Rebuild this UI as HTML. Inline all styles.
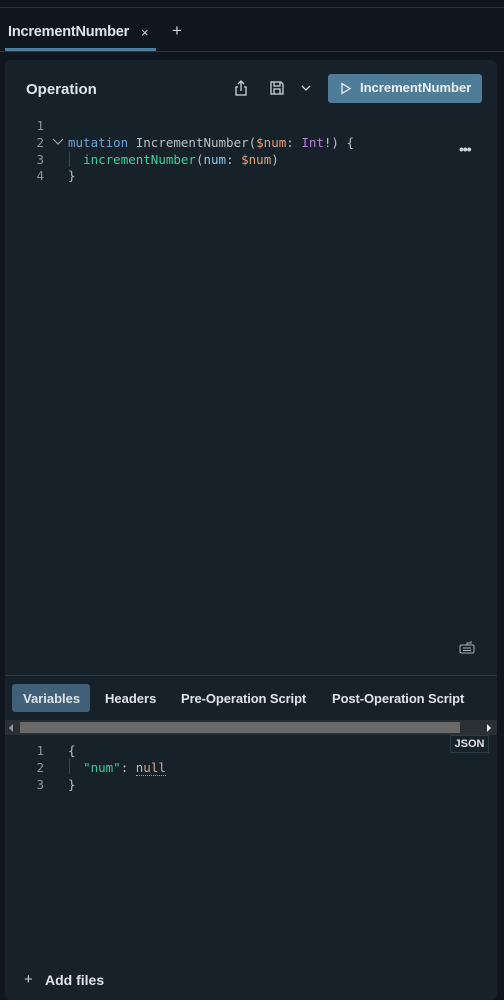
<!DOCTYPE html>
<html><head><meta charset="utf-8"><style>
*{margin:0;padding:0;box-sizing:border-box}
body{width:504px;height:998px;background:#0f161d;font-family:"Liberation Sans",sans-serif;color:#dfe4e8;position:relative;overflow:hidden}
.abs{position:absolute}
.mono{font-family:"DejaVu Sans Mono",monospace;font-size:12.5px;white-space:pre}
.ln{color:#8a949c;width:20px;text-align:right}
</style></head><body>
<div class="abs" style="left:0;top:7px;width:504px;height:1px;background:#26313b"></div>
<div class="abs" style="left:8px;top:24px;font-size:14.5px;font-weight:bold;color:#dfe4e8;letter-spacing:-0.2px">IncrementNumber</div>
<div class="abs" style="left:141px;top:25px;font-size:13px;color:#cdd3d8">×</div>
<div class="abs" style="left:172px;top:21px;font-size:17px;color:#cdd3d8">+</div>
<div class="abs" style="left:5px;top:48px;width:151px;height:3px;background:#4f7d9c"></div>
<div class="abs" style="left:0;top:51px;width:504px;height:1px;background:#2c3943"></div>
<div class="abs" style="left:5px;top:60px;width:492px;height:940px;background:#17212a;border-radius:6px"></div>
<div class="abs" style="left:26px;top:81px;font-size:15px;font-weight:bold;color:#dfe4e8">Operation</div>
<svg class="abs" style="left:233px;top:79px" width="16" height="18" viewBox="0 0 16 18" fill="none" stroke="#cfd5da" stroke-width="1.3"><path d="M8 12V2M5 5l3-3 3 3M5 8H3v8h10V8h-2"/></svg>
<svg class="abs" style="left:269px;top:80px" width="16" height="16" viewBox="0 0 16 16" fill="none" stroke="#cfd5da" stroke-width="1.3"><path d="M2 2h10l2 2v10H2z M5 2v4h6V2 M5 14v-5h6v5"/></svg>
<svg class="abs" style="left:301px;top:84px" width="10" height="8" viewBox="0 0 10 8" fill="none" stroke="#cfd5da" stroke-width="1.3"><path d="M1 2l4 4 4-4"/></svg>
<div class="abs" style="left:328px;top:74px;width:154px;height:29px;background:#4f7d99;border-radius:3px"></div>
<svg class="abs" style="left:340px;top:82px" width="12" height="13" viewBox="0 0 12 13" fill="none" stroke="#e8eef2" stroke-width="1.3"><path d="M2 1.5v10l8-5z"/></svg>
<div class="abs" style="left:360px;top:80px;font-size:13px;font-weight:bold;color:#eef2f5">IncrementNumber</div>
<div class="abs mono ln" style="left:24px;top:118px;line-height:16.8px">1
2
3
4</div>
<svg class="abs" style="left:52px;top:138px" width="12" height="8" viewBox="0 0 12 8" fill="none" stroke="#9aa3aa" stroke-width="1.2"><path d="M1 1l5 5 5-5"/></svg>
<div class="abs" style="left:69px;top:152px;width:1px;height:15px;background:#3a4650"></div>
<div class="abs mono" style="left:68px;top:118px;line-height:16.8px;color:#b8c0c6">
<span style="color:#6ea3d8">mutation</span> IncrementNumber(<span style="color:#e3a27d">$num</span>: <span style="color:#b77ee0">Int</span>!) {
  <span style="color:#3fce9a">incrementNumber</span>(<span style="color:#8fc7ee">num</span>: <span style="color:#e3a27d">$num</span>)
}</div>
<div class="abs" style="left:459px;top:141px;font-size:14px;font-weight:bold;color:#cfd5da;letter-spacing:-1px">•••</div>
<svg class="abs" style="left:459px;top:640px" width="16" height="14" viewBox="0 0 16 14" fill="none" stroke="#aab2b8" stroke-width="1"><rect x="1" y="5" width="14" height="8" rx="1.5"/><path d="M8 5V3h4V1M4 8h8M4 10.5h8"/></svg>
<div class="abs" style="left:5px;top:675px;width:492px;height:1px;background:#2c3d4a"></div>
<div class="abs" style="left:12px;top:684px;width:78px;height:28px;background:#3f6077;border-radius:3px"></div>
<div class="abs" style="left:23px;top:691px;font-size:13px;font-weight:bold;color:#dfe4e8">Variables</div>
<div class="abs" style="left:105px;top:691px;font-size:13px;font-weight:bold;color:#dfe4e8">Headers</div>
<div class="abs" style="left:181px;top:691px;font-size:13px;font-weight:bold;color:#dfe4e8;letter-spacing:-0.1px">Pre-Operation Script</div>
<div class="abs" style="left:332px;top:691px;font-size:13px;font-weight:bold;color:#dfe4e8;letter-spacing:-0.1px">Post-Operation Script</div>
<div class="abs" style="left:5px;top:720px;width:492px;height:15px;background:#2a2f33"></div>
<div class="abs" style="left:20px;top:722px;width:440px;height:11px;background:#6a6a6a"></div>
<div class="abs" style="left:9px;top:724px;width:0;height:0;border-top:4px solid transparent;border-bottom:4px solid transparent;border-right:4px solid #999"></div>
<div class="abs" style="left:487px;top:724px;width:0;height:0;border-top:4px solid transparent;border-bottom:4px solid transparent;border-left:4px solid #eee"></div>
<div class="abs" style="left:450px;top:735px;width:39px;height:18px;border:1px solid #2c3d4a;font-size:11px;font-weight:bold;color:#dfe4e8;text-align:center;line-height:16px">JSON</div>
<div class="abs mono ln" style="left:24px;top:742px;line-height:17px">1
2
3</div>
<div class="abs" style="left:69px;top:759px;width:1px;height:15px;background:#3a4650"></div>
<div class="abs mono" style="left:68px;top:742px;line-height:17px;color:#b8c0c6">{
  <span style="color:#3fce9a">"num"</span>: <span style="color:#d8ae98;border-bottom:1px dotted #c9a227">null</span>
}</div>
<div class="abs" style="left:24px;top:971px;font-size:15px;color:#cfd5da">+</div>
<div class="abs" style="left:45px;top:972px;font-size:14px;font-weight:bold;color:#dfe4e8">Add files</div>
</body></html>
